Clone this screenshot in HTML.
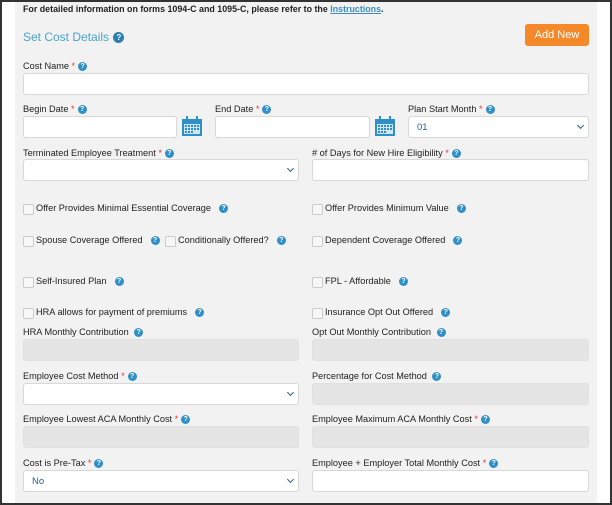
<!DOCTYPE html><html><head><style>
body{margin:0;width:612px;height:505px;overflow:hidden;background:#fff;font-family:"Liberation Sans",Arial,sans-serif;}
#f{position:absolute;left:0;top:0;width:608px;height:501px;border:2px solid #333;background:#fff}
#p{position:absolute;left:15px;top:2px;width:582px;height:501px;background:#f2f2f2}
.a{position:absolute;font-size:9.2px;color:#222;white-space:nowrap}
.r{color:#e33}
.q{display:inline-block;width:9px;height:9px;border-radius:50%;background:#2f8fc9;color:#fff;font-size:7px;font-weight:bold;text-align:center;line-height:9px;vertical-align:1px;margin-left:3px}
.i{position:absolute;background:#fff;border:1px solid #d8d8d8;border-radius:3px;box-sizing:border-box;height:22px}
.d{background:#e5e5e5;border-color:#e0e0e0}
.s::after{content:"";position:absolute;right:5px;top:6px;width:4px;height:4px;border-right:1.5px solid #2a5d8f;border-bottom:1.5px solid #2a5d8f;transform:rotate(45deg)}
.v{position:absolute;left:8px;top:5px;font-size:9.5px;color:#2a5d8f}
.c{position:absolute;width:9px;height:9px;border:1px solid #ccc;background:#f7f7f7;border-radius:2px}
.cal{position:absolute;width:22px;height:20px}
</style></head><body>
<div id="f"></div><div id="p"></div>
<div class="a" style="left:23px;top:4px;font-weight:bold;font-size:8.9px">For detailed information on forms 1094-C and 1095-C, please refer to the <span style="color:#3d8fc0;text-decoration:underline">Instructions</span>.</div>
<div class="a" style="left:23px;top:30px;font-size:12px;color:#4aa3d0">Set Cost Details <span class="q" style="width:11px;height:11px;line-height:11px;font-size:8px;background:#2a7fb3;margin-left:1px">?</span></div>
<div style="position:absolute;left:525px;top:24px;width:64px;height:22px;background:#f5892a;border-radius:3px;color:#fff;font-size:11px;text-align:center;line-height:23px">Add New</div>

<div class="a" style="left:23px;top:61px">Cost Name <span class="r">*</span><span class="q">?</span></div>
<div class="i" style="left:23px;top:73px;width:566px"></div>

<div class="a" style="left:23px;top:104px">Begin Date <span class="r">*</span><span class="q">?</span></div>
<div class="i" style="left:23px;top:116px;width:154px"></div>
<svg class="cal" style="left:181px;top:116px" viewBox="0 0 22 20"><rect x="1" y="3" width="20" height="17" fill="#2f8fc9"/><rect x="3" y="8" width="16" height="10" fill="#cfe6f5"/><g fill="#2f8fc9"><rect x="4" y="9" width="2" height="2"/><rect x="7" y="9" width="2" height="2"/><rect x="10" y="9" width="2" height="2"/><rect x="13" y="9" width="2" height="2"/><rect x="16" y="9" width="2" height="2"/><rect x="4" y="12" width="2" height="2"/><rect x="7" y="12" width="2" height="2"/><rect x="10" y="12" width="2" height="2"/><rect x="13" y="12" width="2" height="2"/><rect x="16" y="12" width="2" height="2"/><rect x="4" y="15" width="2" height="2"/><rect x="7" y="15" width="2" height="2"/><rect x="10" y="15" width="2" height="2"/></g><rect x="5" y="0" width="2" height="5" fill="#2f8fc9"/><rect x="15" y="0" width="2" height="5" fill="#2f8fc9"/></svg>
<div class="a" style="left:215px;top:104px">End Date <span class="r">*</span><span class="q">?</span></div>
<div class="i" style="left:215px;top:116px;width:155px"></div>
<svg class="cal" style="left:374px;top:116px" viewBox="0 0 22 20"><rect x="1" y="3" width="20" height="17" fill="#2f8fc9"/><rect x="3" y="8" width="16" height="10" fill="#cfe6f5"/><g fill="#2f8fc9"><rect x="4" y="9" width="2" height="2"/><rect x="7" y="9" width="2" height="2"/><rect x="10" y="9" width="2" height="2"/><rect x="13" y="9" width="2" height="2"/><rect x="16" y="9" width="2" height="2"/><rect x="4" y="12" width="2" height="2"/><rect x="7" y="12" width="2" height="2"/><rect x="10" y="12" width="2" height="2"/><rect x="13" y="12" width="2" height="2"/><rect x="16" y="12" width="2" height="2"/><rect x="4" y="15" width="2" height="2"/><rect x="7" y="15" width="2" height="2"/><rect x="10" y="15" width="2" height="2"/></g><rect x="5" y="0" width="2" height="5" fill="#2f8fc9"/><rect x="15" y="0" width="2" height="5" fill="#2f8fc9"/></svg>
<div class="a" style="left:408px;top:104px">Plan Start Month <span class="r">*</span><span class="q">?</span></div>
<div class="i s" style="left:408px;top:116px;width:181px"><span class="v">01</span></div>

<div class="a" style="left:23px;top:148px">Terminated Employee Treatment <span class="r">*</span><span class="q">?</span></div>
<div class="i s" style="left:23px;top:159px;width:276px"></div>
<div class="a" style="left:312px;top:148px"># of Days for New Hire Eligibility <span class="r">*</span><span class="q">?</span></div>
<div class="i" style="left:312px;top:159px;width:277px"></div>

<div class="c" style="left:23px;top:204px"></div><div class="a" style="left:36px;top:203px">Offer Provides Minimal Essential Coverage &nbsp;<span class="q">?</span></div>
<div class="c" style="left:312px;top:204px"></div><div class="a" style="left:325px;top:203px">Offer Provides Minimum Value &nbsp;<span class="q">?</span></div>
<div class="c" style="left:23px;top:236px"></div><div class="a" style="left:36px;top:235px">Spouse Coverage Offered &nbsp;<span class="q">?</span></div>
<div class="c" style="left:165px;top:236px"></div><div class="a" style="left:178px;top:235px">Conditionally Offered? &nbsp;<span class="q">?</span></div>
<div class="c" style="left:312px;top:236px"></div><div class="a" style="left:325px;top:235px">Dependent Coverage Offered &nbsp;<span class="q">?</span></div>
<div class="c" style="left:23px;top:277px"></div><div class="a" style="left:36px;top:276px">Self-Insured Plan &nbsp;<span class="q">?</span></div>
<div class="c" style="left:312px;top:277px"></div><div class="a" style="left:325px;top:276px">FPL - Affordable &nbsp;<span class="q">?</span></div>
<div class="c" style="left:23px;top:308px"></div><div class="a" style="left:36px;top:307px">HRA allows for payment of premiums &nbsp;<span class="q">?</span></div>
<div class="c" style="left:312px;top:308px"></div><div class="a" style="left:325px;top:307px">Insurance Opt Out Offered &nbsp;<span class="q">?</span></div>

<div class="a" style="left:23px;top:327px">HRA Monthly Contribution <span class="q">?</span></div>
<div class="i d" style="left:23px;top:339px;width:276px"></div>
<div class="a" style="left:312px;top:327px">Opt Out Monthly Contribution <span class="q">?</span></div>
<div class="i d" style="left:312px;top:339px;width:277px"></div>

<div class="a" style="left:23px;top:371px">Employee Cost Method <span class="r">*</span><span class="q">?</span></div>
<div class="i s" style="left:23px;top:383px;width:276px"></div>
<div class="a" style="left:312px;top:371px">Percentage for Cost Method <span class="q">?</span></div>
<div class="i d" style="left:312px;top:383px;width:277px"></div>

<div class="a" style="left:23px;top:414px">Employee Lowest ACA Monthly Cost <span class="r">*</span><span class="q">?</span></div>
<div class="i d" style="left:23px;top:426px;width:276px"></div>
<div class="a" style="left:312px;top:414px">Employee Maximum ACA Monthly Cost <span class="r">*</span><span class="q">?</span></div>
<div class="i d" style="left:312px;top:426px;width:277px"></div>

<div class="a" style="left:23px;top:458px">Cost is Pre-Tax <span class="r">*</span><span class="q">?</span></div>
<div class="i s" style="left:23px;top:470px;width:276px"><span class="v">No</span></div>
<div class="a" style="left:312px;top:458px">Employee + Employer Total Monthly Cost <span class="r">*</span><span class="q">?</span></div>
<div class="i" style="left:312px;top:470px;width:277px"></div>
</body></html>
